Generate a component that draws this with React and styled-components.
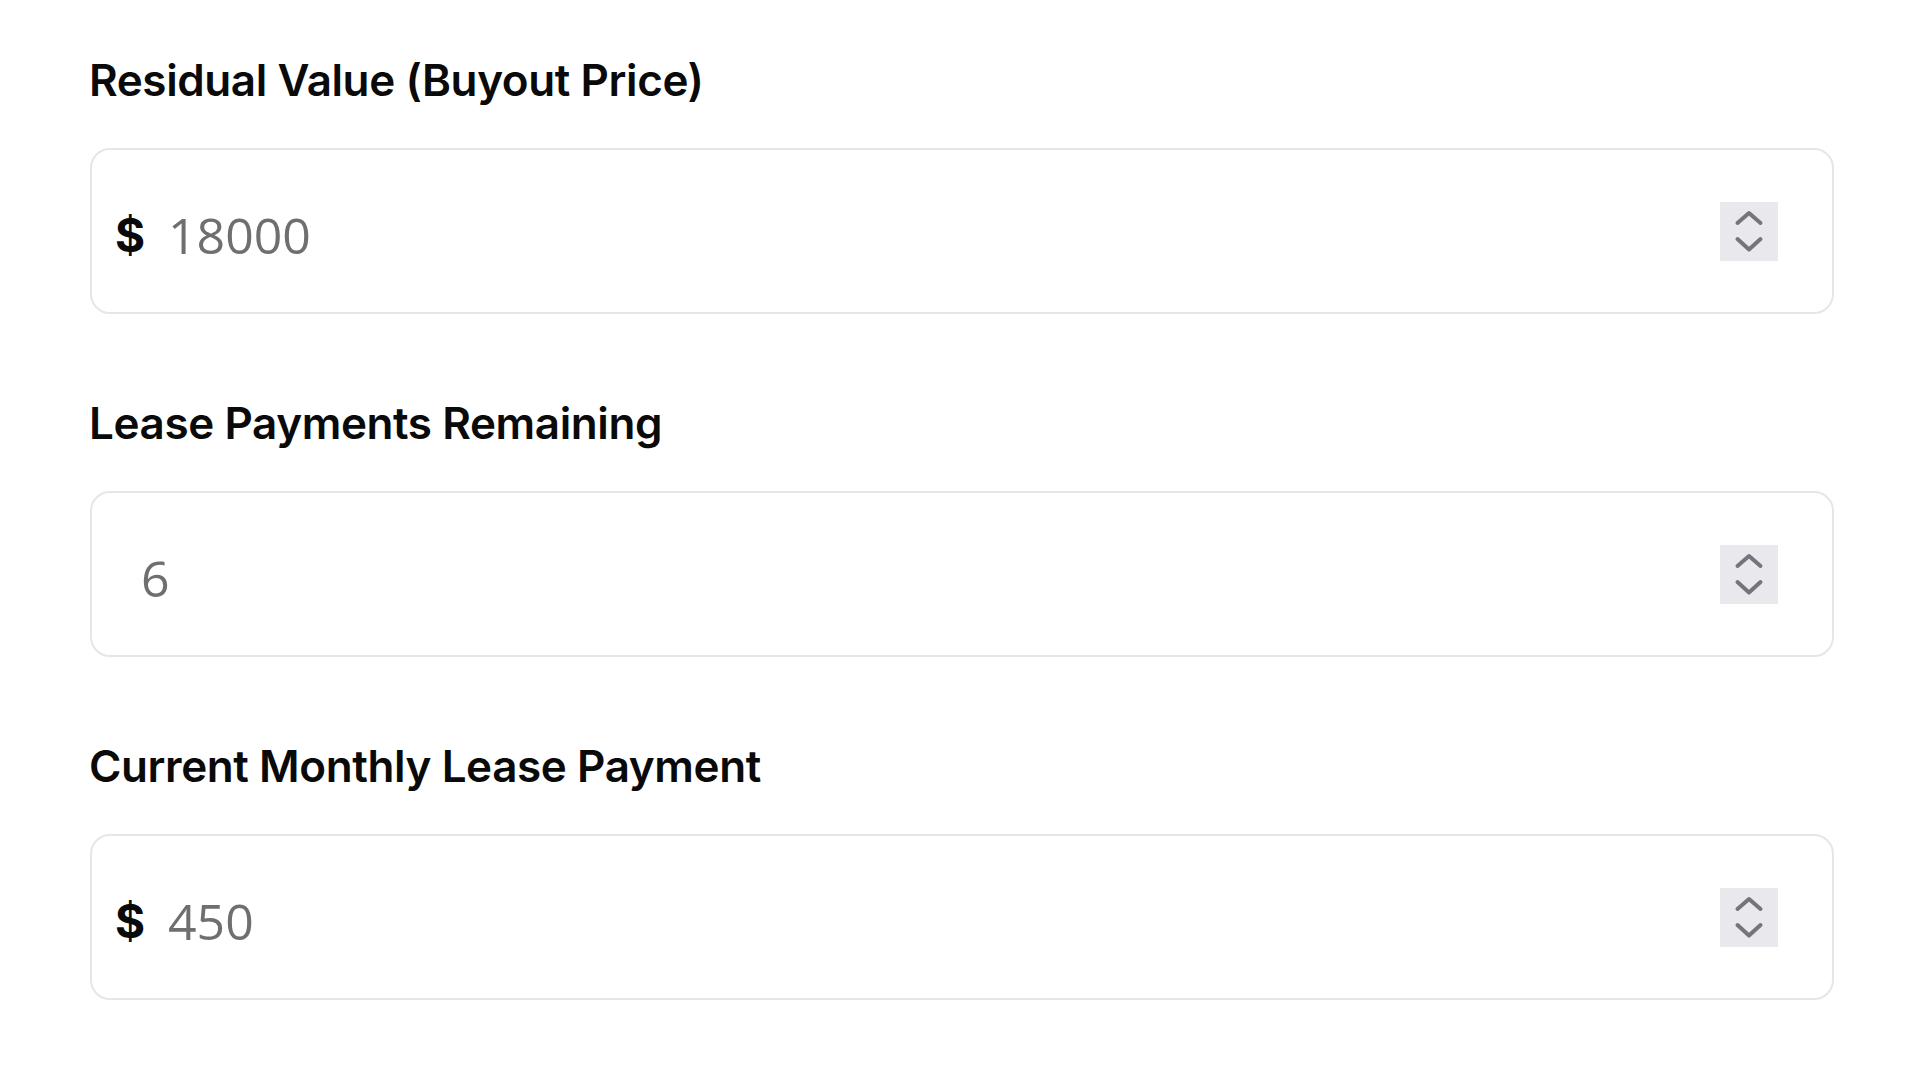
import React from "react";
import styled, { createGlobalStyle } from "styled-components";

const GlobalStyle = createGlobalStyle`
    html, body {
        margin: 0;
        padding: 0;
        background: #ffffff;
    }
    body {
        font-family: "Inter", "Liberation Sans", sans-serif;
        color: #0a0a0a;
    }
`;

const Page = styled.div`
    display: flex;
    flex-direction: column;
    gap: 83px;
    padding: 54px 86px 0 90px;
`;

const Field = styled.div`
    display: flex;
    flex-direction: column;
    gap: 42px;
`;

const Label = styled.label`
    font-family: "Inter", "Liberation Sans", sans-serif;
    font-size: 44px;
    line-height: 52px;
    font-weight: 600;
    letter-spacing: -0.4px;
    color: #0a0a0a;
    margin-left: -1px;
`;

const InputBox = styled.div`
    display: flex;
    align-items: center;
    box-sizing: border-box;
    height: 166px;
    padding: 0 54px 0 ${(p) => (p.$prefixed ? "23px" : "49px")};
    border: 2px solid #e6e6e6;
    border-radius: 20px;
    background: #ffffff;
`;

const Prefix = styled.span`
    font-family: "Inter", "Liberation Sans", sans-serif;
    font-size: 46px;
    font-weight: 700;
    color: #0a0a0a;
    width: 29px;
    margin: 7px 24px 0 0;
    line-height: 1;
`;

const NumberInput = styled.input`
    flex: 1;
    min-width: 0;
    border: none;
    outline: none;
    padding: 0;
    margin-top: 7px;
    background: transparent;
    font-family: "Open Sans", "Noto Sans", sans-serif;
    font-size: 50px;
    color: #6f6f6f;

    &::placeholder {
        color: #6f6f6f;
    }
`;

const Spinner = styled.div`
    display: flex;
    align-items: center;
    justify-content: center;
    width: 58px;
    height: 59px;
    background: #e9e9ed;
    flex-shrink: 0;
`;

function SpinIcon() {
    return (
        <svg width="58" height="59" viewBox="0 0 58 59">
            <polyline
                points="17.5,21 29,11 40.5,21"
                fill="none"
                stroke="#74747c"
                strokeWidth="4"
                strokeLinecap="round"
                strokeLinejoin="round"
            />
            <polyline
                points="17.5,37 29,47.5 40.5,37"
                fill="none"
                stroke="#74747c"
                strokeWidth="4"
                strokeLinecap="round"
                strokeLinejoin="round"
            />
        </svg>
    );
}

const fields = [
    { label: "Residual Value (Buyout Price)", value: "18000", prefix: "$" },
    { label: "Lease Payments Remaining", value: "6" },
    { label: "Current Monthly Lease Payment", value: "450", prefix: "$" },
];

function App() {
    return (
        <>
            <GlobalStyle />
            <Page>
                {fields.map((f) => (
                    <Field key={f.label}>
                        <Label>{f.label}</Label>
                        <InputBox $prefixed={!!f.prefix}>
                            {f.prefix && <Prefix>{f.prefix}</Prefix>}
                            <NumberInput type="text" placeholder={f.value} readOnly />
                            <Spinner>
                                <SpinIcon />
                            </Spinner>
                        </InputBox>
                    </Field>
                ))}
            </Page>
        </>
    );
}

export default App;
